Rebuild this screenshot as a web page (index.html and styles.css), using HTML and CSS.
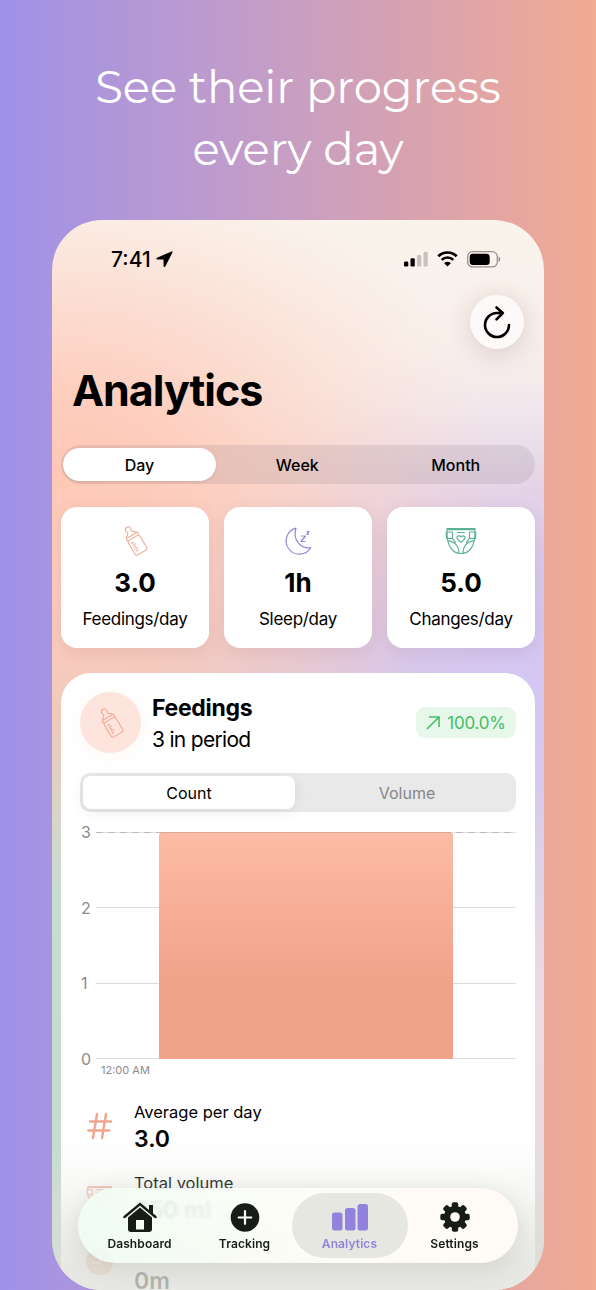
FILE: index.html
```html
<!DOCTYPE html>
<html lang="en">
<head>
    <meta charset="UTF-8">
    <meta name="viewport" content="width=device-width, initial-scale=1.0">
    <title>Analytics</title>
    <link rel="stylesheet" href="styles.css">
</head>
<body>
    <svg class="defs" width="0" height="0">
        <symbol id="bottle" viewBox="0 0 32 32">
            <g transform="rotate(-31 16 16)" fill="none" stroke="currentColor" stroke-linejoin="round" stroke-linecap="round">
                <path d="M14 5.500c0-1-.8-1.500-.8-2.700a2.800 2.800 0 0 1 5.600 0c0 1.200-.8 1.700-.8 2.700M14 5.500c-.3 1.500-3.200 1.800-3.700 4M18 5.500c.3 1.500 3.200 1.800 3.700 4"/>
                <rect x="9.300" y="9.500" width="13.400" height="3" rx="1"/>
                <path d="M10 12.500l-.7 2v12.900a2 2 0 0 0 2 2h9.400a2 2 0 0 0 2-2V14.500l-.7-2"/>
                <path d="M12 16.500h2M12 18.700h3M12 20.900h2M12 23.100h3M12 25.300h2"/>
            </g>
        </symbol>
        <symbol id="diaper" viewBox="0 0 32 28">
            <g fill="none" stroke="currentColor" stroke-width="1.200" stroke-linejoin="round">
                <path d="M2 1.500h28v4c0 13-5 21-14 21S2 18.500 2 5.500z"/>
                <path d="M2 2.600h28M12 5.500h8"/>
                <path d="M1.200 5h6.300v6.300H1.500zM30.800 5h-6.300v6.300h6z"/>
                <path d="M2.800 13.800c6.500.2 11.200 5 11.200 12.500M29.200 13.800C22.700 14 18 18.800 18 26.300M7.500 11.300l3.500 4.500M24.500 11.300L21 15.800"/>
                <path d="M16 15.200c-3-2-4-3.200-4-4.600 0-2 2.800-2.500 4-.6 1.200-1.900 4-1.400 4 .6 0 1.400-1 2.600-4 4.600z"/>
            </g>
        </symbol>
    </svg>

    <h1 class="headline">See their progress<br>every day</h1>

    <div class="phone">
        <div class="status-bar">
            <div class="time">
                <span>7:41</span>
                <svg width="17" height="17" viewBox="0 0 17 17"><path d="M15.500 .4L1 6.800c-1 .5-.7 1.700.3 1.700l6.200.1.1 6.600c0 1 1.300 1.300 1.700.3L16.500 1.400c.3-.7-.3-1.300-1-1z"/></svg>
            </div>
            <div class="signals">
                <svg width="24" height="16" viewBox="0 0 24 16">
                    <rect x="0" y="10.500" width="4.300" height="5" rx="1.300"/>
                    <rect x="6.500" y="7.200" width="4.300" height="8.300" rx="1.300"/>
                    <rect class="dim" x="13" y="4" width="4.300" height="11.500" rx="1.300"/>
                    <rect class="dim" x="19.500" y=".8" width="4.300" height="14.700" rx="1.300"/>
                </svg>
                <svg width="21" height="16" viewBox="0 0 21 16">
                    <path class="wave" d="M1.300 5.300a13 13 0 0 1 18.400 0M4.700 8.900a8.200 8.200 0 0 1 11.600 0"/>
                    <path d="M10.500 15.500L7.200 12.200a4.700 4.700 0 0 1 6.600 0z"/>
                </svg>
                <svg width="34" height="17" viewBox="0 0 34 17">
                    <rect class="shell" x=".7" y=".7" width="29.600" height="15.200" rx="5"/>
                    <rect x="2.700" y="2.700" width="20" height="11.200" rx="3.200"/>
                    <path class="cap" d="M31.700 5.600c2 .8 2 4.600 0 5.400z"/>
                </svg>
            </div>
        </div>

        <button class="refresh" aria-label="Refresh">
            <svg width="30" height="34" viewBox="0 0 30 34"><path d="M27 20a12 12 0 1 1-12-12h5.500M14.500 2.500l6.300 5.500-6.300 6.300"/></svg>
        </button>

        <h2 class="title">Analytics</h2>

        <div class="range">
            <span class="range-item active">Day</span>
            <span class="range-item">Week</span>
            <span class="range-item">Month</span>
        </div>

        <div class="summary">
            <div class="tile">
                <svg class="coral" width="32" height="32"><use href="#bottle"/></svg>
                <strong>3.0</strong>
                <span>Feedings/day</span>
            </div>
            <div class="tile">
                <svg class="violet" width="32" height="32" viewBox="0 0 32 32" fill="none" stroke="currentColor" stroke-width="1.200" stroke-linejoin="round">
                    <path d="M14 3.200A13.200 13.200 0 1 0 28.800 22.500C18 24.500 10.500 14 14 3.200z"/>
                    <path d="M19 11h4.500L19 16.500h4.500M24.800 6.500h2.200l-2.200 2.700H27"/>
                </svg>
                <strong>1h</strong>
                <span>Sleep/day</span>
            </div>
            <div class="tile">
                <svg class="green" width="32" height="32" viewBox="0 -2 32 32"><use href="#diaper" width="32" height="28"/></svg>
                <strong>5.0</strong>
                <span>Changes/day</span>
            </div>
        </div>

        <div class="card">
            <div class="card-head">
                <div class="avatar"><svg class="coral" width="32" height="32"><use href="#bottle"/></svg></div>
                <div class="card-title">
                    <h3>Feedings</h3>
                    <p>3 in period</p>
                </div>
                <div class="trend">
                    <svg width="14" height="14" viewBox="0 0 14 14"><path d="M1 13L13 1M3 1H13v10"/></svg>
                    <span>100.0%</span>
                </div>
            </div>

            <div class="toggle">
                <span class="toggle-item active">Count</span>
                <span class="toggle-item">Volume</span>
            </div>

            <div class="chart">
                <div class="y-axis"><span>3</span><span>2</span><span>1</span><span>0</span></div>
                <div class="plot">
                    <div class="line dashed"></div>
                    <div class="line"></div>
                    <div class="line"></div>
                    <div class="line"></div>
                    <div class="bar" style="height:100%;"></div>
                </div>
            </div>
            <p class="x-label">12:00 AM</p>

            <div class="stats">
                <div class="stat">
                    <svg class="coral" width="24" height="28" viewBox="0 0 24 28"><path class="hash" d="M9.500 2L5.500 26M18.500 2l-4 24M2.500 9.500h21M.8 18.500h21"/></svg>
                    <div><p>Average per day</p><strong>3.0</strong></div>
                </div>
                <div class="stat faded">
                    <svg class="coral" width="26" height="26" viewBox="0 0 32 28"><use href="#diaper" width="32" height="28"/></svg>
                    <div><p>Total volume</p><strong>350 ml</strong></div>
                </div>
                <div class="stat ghost">
                    <svg class="coral" width="27" height="27" viewBox="0 0 27 27"><circle cx="13.500" cy="13.500" r="13.500" fill="currentColor"/><path d="M13.500 5v10H7" fill="none" stroke="#eee" stroke-width="2"/></svg>
                    <div><strong>0m</strong></div>
                </div>
            </div>
        </div>

        <div class="fade"></div>

        <nav class="tab-bar">
            <a class="tab">
                <svg width="34" height="30" viewBox="0 0 34 30">
                    <path class="roof" d="M1.500 15L17 2l15.500 13"/>
                    <path d="M26 3h4v9l-4-3.500z"/>
                    <path d="M17 5.500L29 15.500V27a3 3 0 0 1-3 3H8a3 3 0 0 1-3-3V15.500zM13 18v9.500h8V18z" fill-rule="evenodd"/>
                </svg>
                <span>Dashboard</span>
            </a>
            <a class="tab">
                <svg width="30" height="30" viewBox="0 0 30 30"><circle cx="15" cy="15.500" r="14.300"/><path class="plus" d="M15 9.200v12.600M8.700 15.500h12.600"/></svg>
                <span>Tracking</span>
            </a>
            <a class="tab active">
                <svg width="36" height="30" viewBox="0 0 36 30"><rect x="0" y="10.500" width="10.500" height="18" rx="2.500"/><rect x="13" y="6" width="10.500" height="22.500" rx="2.500"/><rect x="25.500" y="2" width="10.500" height="26.500" rx="2.500"/></svg>
                <span>Analytics</span>
            </a>
            <a class="tab">
                <svg width="30" height="30" viewBox="-15 -15 30 30">
                    <g id="teeth"><rect x="-3.200" y="-14.700" width="6.400" height="29.400" rx="2"/><rect x="-14.700" y="-3.200" width="29.400" height="6.400" rx="2"/></g>
                    <use href="#teeth" transform="rotate(45)"/>
                    <circle r="11"/>
                    <circle class="hub" r="4.800"/>
                </svg>
                <span>Settings</span>
            </a>
        </nav>
    </div>
</body>
</html>
```
FILE: styles.css
```css
* {
    box-sizing: border-box;
    margin: 0;
    padding: 0;
}

body {
    width: 596px;
    height: 1290px;
    overflow: hidden;
    font-family: Inter, "Liberation Sans", sans-serif;
    color: #000;
    background: linear-gradient(90deg, #9e91ea 0%, #a994df 11%, #c39dc8 43%, #d7a2b0 68%, #e7a79f 87%, #f1ab92 100%);
}

.defs {
    position: absolute;
}

.headline {
    height: 220px;
    padding-top: 56px;
    text-align: center;
    font-family: Montserrat, Lato, sans-serif;
    font-size: 45px;
    font-weight: 400;
    line-height: 62px;
    letter-spacing: -0.1px;
    color: #fff;
}

.phone {
    position: relative;
    display: flex;
    flex-direction: column;
    width: 492px;
    height: 1070px;
    margin-left: 52px;
    padding: 0 9px;
    overflow: hidden;
    border-radius: 50px;
    background:
        radial-gradient(ellipse 440px 310px at 0 250px, #ffc8b6 0%, rgba(255, 200, 182, 0.85) 25%, rgba(255, 200, 182, 0.48) 55%, rgba(255, 200, 182, 0.18) 80%, rgba(255, 200, 182, 0) 100%),
        radial-gradient(ellipse 420px 340px at 100% 450px, #d3c6f3 0%, rgba(211, 198, 243, 0.85) 30%, rgba(211, 198, 243, 0.42) 60%, rgba(211, 198, 243, 0.1) 85%, rgba(211, 198, 243, 0) 100%),
        radial-gradient(ellipse 160px 360px at 100% 800px, #eddbe4 0%, rgba(237, 219, 228, 0.8) 50%, rgba(237, 219, 228, 0) 100%),
        linear-gradient(180deg, #faf3ec 0%, #f8eeea 18%, #f4cdc2 38%, #edcabd 46%, #c9dccf 62%, #c3dccf 80%, #cbdcd0 100%);
}

.phone > * {
    flex-shrink: 0;
}

.status-bar {
    display: flex;
    justify-content: space-between;
    padding: 29px 34px 0 50px;
    height: 75px;
}

.time,
.signals {
    display: flex;
    align-items: center;
    height: 20px;
}

.time {
    gap: 5px;
    font-size: 21px;
    font-weight: 500;
}

.signals {
    gap: 9px;
}

.dim {
    opacity: 0.2;
}

.wave {
    fill: none;
    stroke: #000;
    stroke-width: 2.700;
}

.shell {
    fill: none;
    stroke: #000;
    stroke-opacity: 0.4;
    stroke-width: 1.300;
}

.cap {
    opacity: 0.45;
}

.refresh {
    display: flex;
    align-items: center;
    justify-content: center;
    align-self: flex-end;
    width: 54px;
    height: 54px;
    margin-right: 11px;
    border: none;
    border-radius: 50%;
    background: #fdf9f8;
    box-shadow: 0 4px 26px rgba(90, 60, 70, 0.2);
}

.refresh path {
    fill: none;
    stroke: #000;
    stroke-width: 2.600;
    stroke-linecap: round;
    stroke-linejoin: round;
}

.title {
    height: 96px;
    padding: 16px 0 0 11px;
    font-size: 43px;
    line-height: 50px;
    letter-spacing: -1px;
}

.range {
    display: flex;
    height: 39px;
    padding: 3px 0 3px 2px;
    border-radius: 20px;
    background: rgba(110, 100, 110, 0.14);
}

.range-item {
    flex: 1;
    font-size: 16px;
    font-weight: 500;
    line-height: 34px;
    text-align: center;
}

.range-item.active {
    flex: 0 0 153px;
    margin-right: 2px;
    border-radius: 17px;
    background: #fff;
    box-shadow: 0 1px 3px rgba(0, 0, 0, 0.1);
}

.summary {
    display: flex;
    gap: 15px;
    margin-top: 23px;
}

.tile {
    display: flex;
    flex: 1;
    flex-direction: column;
    align-items: center;
    height: 141px;
    padding-top: 18px;
    border-radius: 16px;
    background: #fff;
    box-shadow: 0 4px 16px rgba(120, 80, 90, 0.12);
}

.tile strong {
    margin-top: 10px;
    font-size: 26px;
    line-height: 32px;
}

.tile span {
    margin-top: 10px;
    font-size: 17px;
    line-height: 20px;
    letter-spacing: -0.3px;
}

.coral {
    color: #f1a58c;
}

.violet {
    color: #9385dd;
}

.green {
    color: #5cb295;
}

.card {
    height: 640px;
    margin-top: 25px;
    padding: 19px;
    border-radius: 30px 30px 0 0;
    background: #fff;
}

.card-head {
    display: flex;
    align-items: center;
    height: 61px;
}

.avatar {
    display: flex;
    align-items: center;
    justify-content: center;
    width: 61px;
    height: 61px;
    margin-right: 11px;
    border-radius: 50%;
    background: #fde5de;
    box-shadow: 0 3px 18px rgba(240, 150, 120, 0.08);
}

.card-title {
    flex: 1;
    padding-top: 3px;
}

.card-title h3 {
    font-size: 23px;
    line-height: 32px;
    letter-spacing: -0.3px;
}

.card-title p {
    font-size: 21px;
    line-height: 32px;
    letter-spacing: -0.7px;
}

.trend {
    display: flex;
    align-items: center;
    justify-content: center;
    gap: 7px;
    width: 100px;
    height: 31px;
    border-radius: 9px;
    font-size: 17px;
    letter-spacing: -0.2px;
    color: #45bd64;
    background: #e7f8ea;
}

.trend path {
    fill: none;
    stroke: currentColor;
    stroke-width: 1.600;
}

.toggle {
    display: flex;
    height: 39px;
    margin-top: 20px;
    padding: 3px 0 3px 3px;
    border-radius: 10px;
    background: #e9e9e9;
}

.toggle-item {
    flex: 1;
    font-size: 16px;
    line-height: 34px;
    text-align: center;
    color: #868689;
}

.toggle-item.active {
    flex: 0 0 212px;
    margin-right: 3px;
    color: #000;
    border-radius: 8px;
    background: #fff;
    box-shadow: 0 3px 14px rgba(0, 0, 0, 0.08);
}

.chart {
    display: flex;
    height: 227px;
    margin-top: 20px;
}

.y-axis {
    display: flex;
    flex-direction: column;
    justify-content: space-between;
    width: 16px;
    margin: -10px 0;
    padding-left: 1px;
    font-size: 16px;
    line-height: 20px;
    color: #8b8b8e;
}

.plot {
    position: relative;
    display: flex;
    flex: 1;
    flex-direction: column;
    justify-content: space-between;
}

.line {
    height: 1px;
    background: #dcdcdd;
}

.line.dashed {
    background: repeating-linear-gradient(90deg, #bdbdbf 0 7px, #e0e0e0 7px 12px);
}

/* the bar sits on top of the grid lines */
.bar {
    position: absolute;
    bottom: 0;
    left: 15%;
    width: 70%;
    border-radius: 4px 4px 0 0;
    border-top: 1px dashed #d3aa9d;
    background: linear-gradient(180deg, #fcbba6 0%, #f1a389 65%, #f1a389 100%);
}

.x-label {
    margin: 3px 0 0 21px;
    font-size: 11px;
    line-height: 16px;
    color: #8b8b8e;
}

.stats {
    display: flex;
    flex-direction: column;
    gap: 17px;
    margin-top: 21px;
    padding-left: 6px;
}

.stat {
    display: flex;
    align-items: center;
    height: 54px;
}

.stat > div {
    flex: 1;
}

.stat > svg {
    width: 27px;
    margin-right: 21px;
}

.stat p {
    font-size: 16.500px;
    line-height: 26px;
}

.stat strong {
    display: block;
    font-size: 23px;
    font-weight: 600;
    line-height: 28px;
}

.hash {
    fill: none;
    stroke: currentColor;
    stroke-width: 2.400;
    stroke-linecap: round;
}

.stat.faded svg {
    opacity: 0.7;
}

.stat.ghost {
    opacity: 0.75;
}

.stat.ghost svg {
    margin-top: -14px;
    opacity: 0.7;
}

.stat.ghost strong {
    margin-top: 26px;
}

.fade {
    position: absolute;
    right: 0;
    bottom: 0;
    left: 0;
    height: 150px;
    background: linear-gradient(180deg, rgba(225, 225, 218, 0) 0%, rgba(225, 225, 220, 0.2) 26%, rgba(222, 223, 216, 0.72) 85%);
}

.tab-bar {
    position: absolute;
    bottom: 27px;
    left: 26px;
    display: flex;
    width: 440px;
    height: 75px;
    padding: 5px 9px;
    border-radius: 38px;
    background: linear-gradient(90deg, rgba(239, 254, 245, 0.86), rgba(253, 252, 246, 0.95) 50%, rgba(255, 250, 246, 0.97));
    box-shadow: 0 4px 24px rgba(80, 80, 70, 0.15);
    backdrop-filter: blur(1.500px);
}

.tab {
    display: flex;
    flex: 0 0 105px;
    flex-direction: column;
    align-items: center;
    gap: 3px;
    padding-top: 9px;
    font-size: 12px;
    font-weight: 600;
    line-height: 17px;
    letter-spacing: 0.1px;
    color: #171d16;
    fill: #171d16;
}

/* the pill is wider than its slot */
.tab.active {
    flex: 0 0 116px;
    margin: 0 -5.500px;
    border-radius: 33px;
    color: #9382dd;
    fill: #9382dd;
    background: #e6e7e0;
}

.roof {
    fill: none;
    stroke: #171d16;
    stroke-width: 2.400;
    stroke-linecap: round;
}

.plus {
    stroke: #fff;
    stroke-width: 2.200;
    stroke-linecap: round;
}

.hub {
    fill: #fefaf6;
}
```
